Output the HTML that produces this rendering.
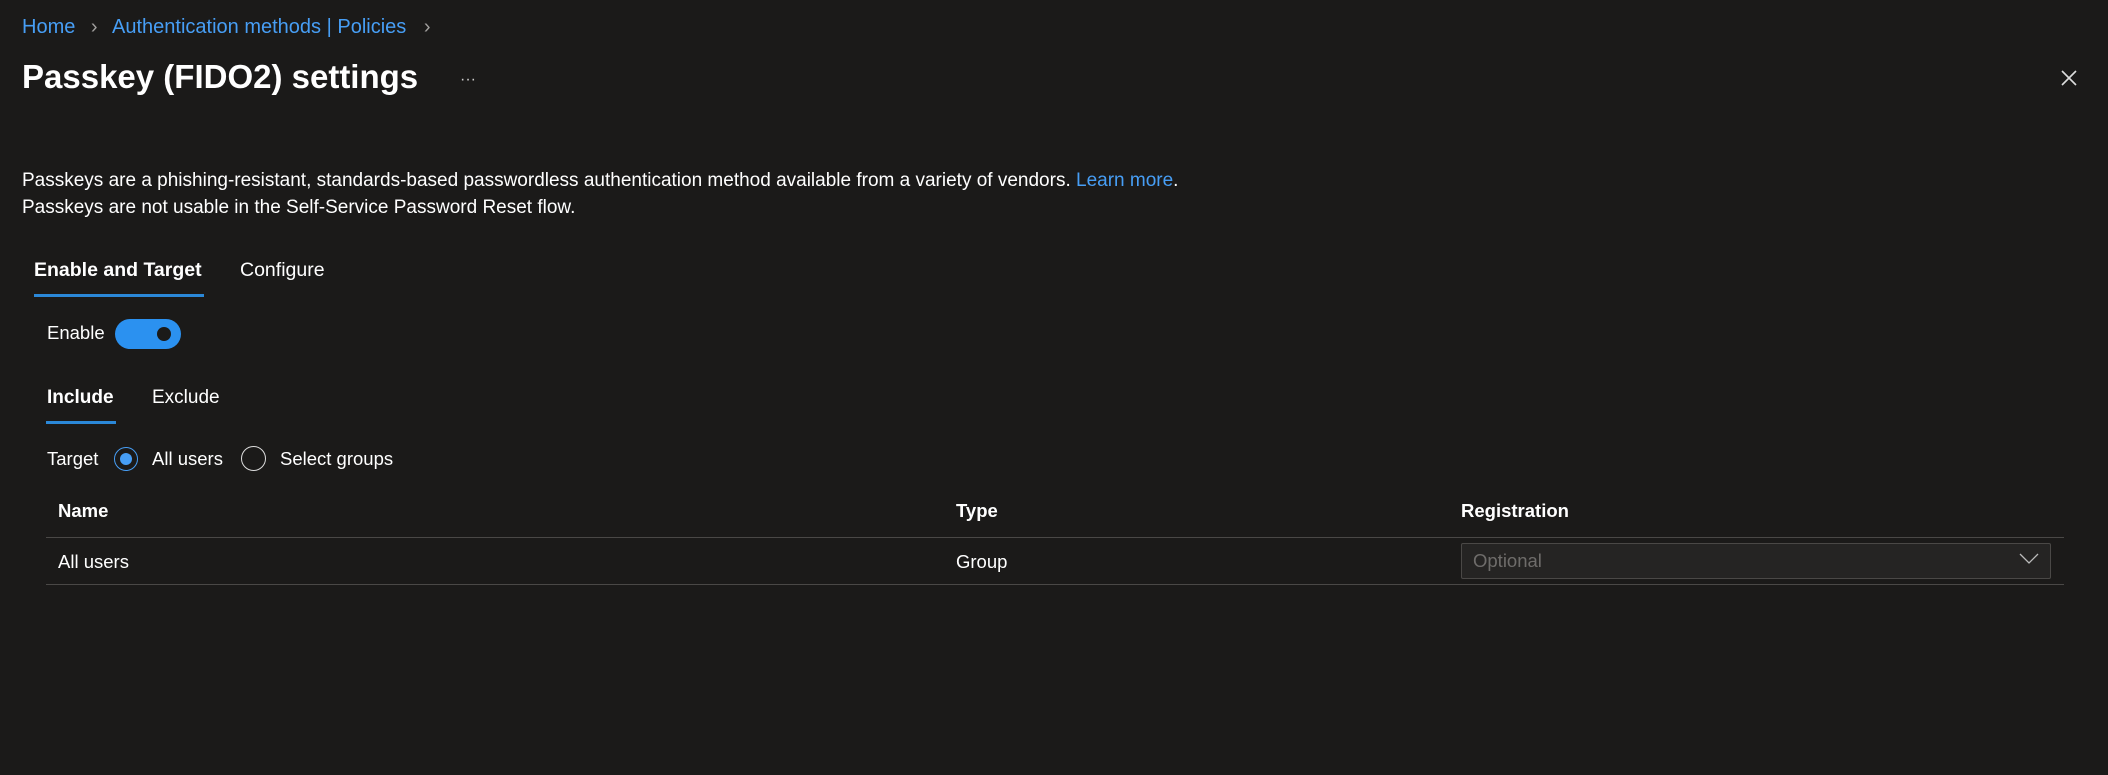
<!DOCTYPE html>
<html><head><meta charset="utf-8"><style>
body{margin:0;width:2108px;height:775px;background:#1b1a19;font-family:"Liberation Sans",sans-serif;color:#fff;position:relative;overflow:hidden}
.a{position:absolute;white-space:nowrap;line-height:1}
.blue{color:#479ef5}
.line{position:absolute;left:46px;width:2018px;height:1px;background:#4a4846}
</style></head><body>
<div class="a blue" style="left:22px;top:17px;font-size:20px">Home <span style="color:#a19f9d;margin:0 10px">&#x203A;</span> Authentication methods | Policies <span style="color:#a19f9d;margin-left:12px">&#x203A;</span></div>
<div class="a" style="left:22px;top:60px;font-size:33px;font-weight:bold">Passkey (FIDO2) settings</div>
<div class="a" style="left:460px;top:72px;font-size:16px;color:#ccc">···</div>
<svg class="a" style="left:2061px;top:70px" width="16" height="16"><path d="M1 1L15 15M15 1L1 15" stroke="#ddd" stroke-width="1.6"/></svg>
<div class="a" style="left:22px;top:171px;font-size:19px">Passkeys are a phishing-resistant, standards-based passwordless authentication method available from a variety of vendors. <span class="blue">Learn more</span>.</div>
<div class="a" style="left:22px;top:198px;font-size:19px">Passkeys are not usable in the Self-Service Password Reset flow.</div>
<div class="a" style="left:34px;top:261px;font-size:19.5px;font-weight:bold">Enable and Target</div>
<div style="position:absolute;left:34px;top:294px;width:170px;height:3px;background:#2b88d8"></div>
<div class="a" style="left:240px;top:261px;font-size:19.5px">Configure</div>
<div class="a" style="left:47px;top:324px;font-size:18.5px">Enable</div>
<div style="position:absolute;left:115px;top:319px;width:66px;height:30px;border-radius:15px;background:#2b91f0"></div>
<div style="position:absolute;left:157px;top:327px;width:14px;height:14px;border-radius:50%;background:#1b1a19"></div>
<div class="a" style="left:47px;top:388px;font-size:19px;font-weight:bold">Include</div>
<div style="position:absolute;left:46px;top:421px;width:70px;height:3px;background:#2b88d8"></div>
<div class="a" style="left:152px;top:388px;font-size:19px">Exclude</div>
<div class="a" style="left:47px;top:450px;font-size:18.5px">Target</div>
<div style="position:absolute;left:114px;top:447px;width:22px;height:22px;border-radius:50%;border:1.5px solid #479ef5"></div>
<div style="position:absolute;left:120px;top:453px;width:12px;height:12px;border-radius:50%;background:#479ef5"></div>
<div class="a" style="left:152px;top:450px;font-size:18.5px">All users</div>
<div style="position:absolute;left:241px;top:446px;width:23px;height:23px;border-radius:50%;border:1.5px solid #ddd"></div>
<div class="a" style="left:280px;top:450px;font-size:18.5px">Select groups</div>
<div class="a" style="left:58px;top:502px;font-size:18.5px;font-weight:bold">Name</div>
<div class="a" style="left:956px;top:502px;font-size:18.5px;font-weight:bold">Type</div>
<div class="a" style="left:1461px;top:502px;font-size:18.5px;font-weight:bold">Registration</div>
<div class="line" style="top:537px"></div>
<div class="a" style="left:58px;top:553px;font-size:18.5px">All users</div>
<div class="a" style="left:956px;top:553px;font-size:18.5px">Group</div>
<div style="position:absolute;left:1461px;top:543px;width:588px;height:34px;background:#252423;border:1px solid #4a4846;border-radius:2px"></div>
<div class="a" style="left:1473px;top:552px;font-size:18.5px;color:#6e6c6a">Optional</div>
<svg class="a" style="left:2019px;top:553px" width="20" height="12"><path d="M1 1L10 10L19 1" stroke="#bbb" stroke-width="1.3" fill="none"/></svg>
<div class="line" style="top:584px"></div>
</body></html>
